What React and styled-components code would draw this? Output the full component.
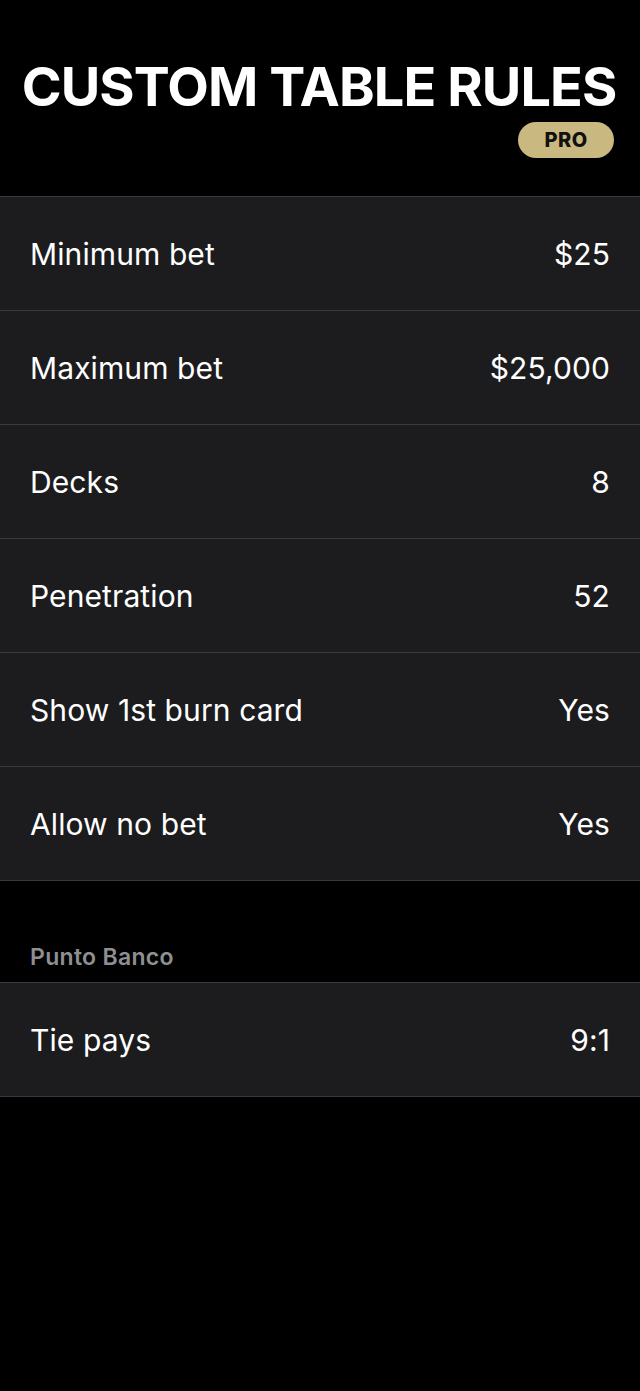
import React from 'react';
import styled, { createGlobalStyle } from 'styled-components';

const GlobalStyle = createGlobalStyle`
  html, body {
    margin: 0;
    padding: 0;
    background: #000;
  }
  body {
    font-family: Inter, "Noto Sans", "Liberation Sans", sans-serif;
    color: #fff;
  }
`;

const Page = styled.div`
  width: 640px;
  min-height: 1391px;
  background: #000;
`;

const Header = styled.header`
  display: flex;
  flex-direction: column;
  align-items: flex-end;
  padding: 56px 26px 38px 24px;
`;

const Title = styled.h1`
  margin: 0;
  align-self: center;
  font-size: 54px;
  line-height: 62px;
  font-weight: 700;
  letter-spacing: -0.9px;
  white-space: nowrap;
`;

const Badge = styled.span`
  display: flex;
  align-items: center;
  justify-content: center;
  width: 96px;
  height: 36px;
  margin-top: 4px;
  border-radius: 18px;
  background: #c9b880;
  color: #111;
  font-size: 20px;
  font-weight: 800;
  letter-spacing: 0.5px;
`;

const Group = styled.section`
  border-top: 1px solid #3a3a3c;
`;

const Row = styled.div`
  display: flex;
  align-items: center;
  justify-content: space-between;
  height: 113px;
  padding: 0 30px;
  background: #1c1c1e;
  border-bottom: 1px solid #3a3a3c;
  font-size: 30px;
  font-weight: 400;
  letter-spacing: 0.1px;
`;

const SectionLabel = styled.div`
  padding: 63px 30px 11px;
  color: #8e8e93;
  font-size: 23px;
  font-weight: 600;
  line-height: 27px;
  letter-spacing: 0.3px;
`;

const rules = [
  ['Minimum bet', '$25'],
  ['Maximum bet', '$25,000'],
  ['Decks', '8'],
  ['Penetration', '52'],
  ['Show 1st burn card', 'Yes'],
  ['Allow no bet', 'Yes'],
];

export default function App() {
  return (
    <Page>
      <GlobalStyle />
      <Header>
        <Title>CUSTOM TABLE RULES</Title>
        <Badge>PRO</Badge>
      </Header>

      <Group>
        {rules.map(([label, value]) => (
          <Row key={label}>
            <span>{label}</span>
            <span>{value}</span>
          </Row>
        ))}
      </Group>

      <SectionLabel>Punto Banco</SectionLabel>
      <Group>
        <Row>
          <span>Tie pays</span>
          <span>9:1</span>
        </Row>
      </Group>
    </Page>
  );
}
